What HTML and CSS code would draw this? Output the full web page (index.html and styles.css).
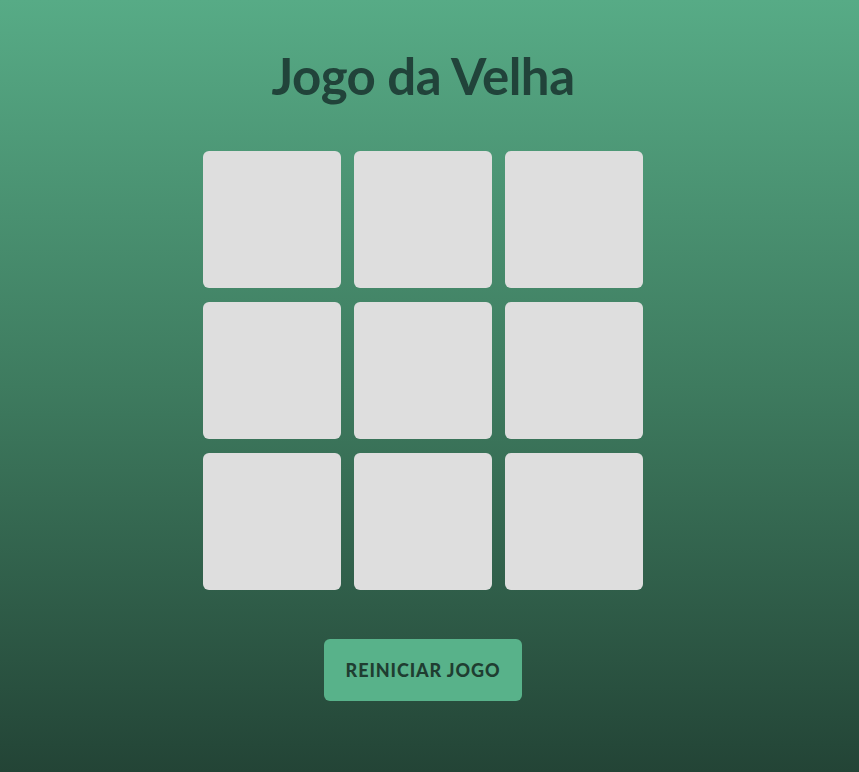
FILE: index.html
```html
<!DOCTYPE html>
<html lang="pt-BR">
<head>
<meta charset="utf-8">
<title>Jogo da Velha</title>
<link rel="stylesheet" href="styles.css">
</head>
<body>
<main class="app">
  <h1 class="title">Jogo da Velha</h1>
  <div class="board">
    <div class="cell"></div>
    <div class="cell"></div>
    <div class="cell"></div>
    <div class="cell"></div>
    <div class="cell"></div>
    <div class="cell"></div>
    <div class="cell"></div>
    <div class="cell"></div>
    <div class="cell"></div>
  </div>
  <button class="reset">REINICIAR JOGO</button>
</main>
</body>
</html>
```
FILE: styles.css
```css
html, body {
  margin: 0;
  padding: 0;
  height: 100%;
}
body {
  background: linear-gradient(to bottom, #57ab86, #3e7b5f 50%, #234436);
  font-family: "Lato", "Open Sans", sans-serif;
}
.app {
  width: 846px;
  display: flex;
  flex-direction: column;
  align-items: center;
  padding-top: 44px;
}
.title {
  margin: 0;
  font-size: 51px;
  font-weight: 700;
  color: #21433a;
  line-height: 64px;
  letter-spacing: -0.5px;
}
.board {
  margin-top: 43px;
  display: grid;
  grid-template-columns: repeat(3, 138px);
  grid-auto-rows: 137px;
  column-gap: 13px;
  row-gap: 14px;
}
.cell {
  background: #dedede;
  border-radius: 6px;
}
.reset {
  margin-top: 49px;
  width: 198px;
  height: 62px;
  border: none;
  border-radius: 6px;
  background: #58b28a;
  color: #1f3d31;
  font-family: "Lato", "Open Sans", sans-serif;
  font-weight: 900;
  font-size: 18px;
  letter-spacing: 0.9px;
}
```
